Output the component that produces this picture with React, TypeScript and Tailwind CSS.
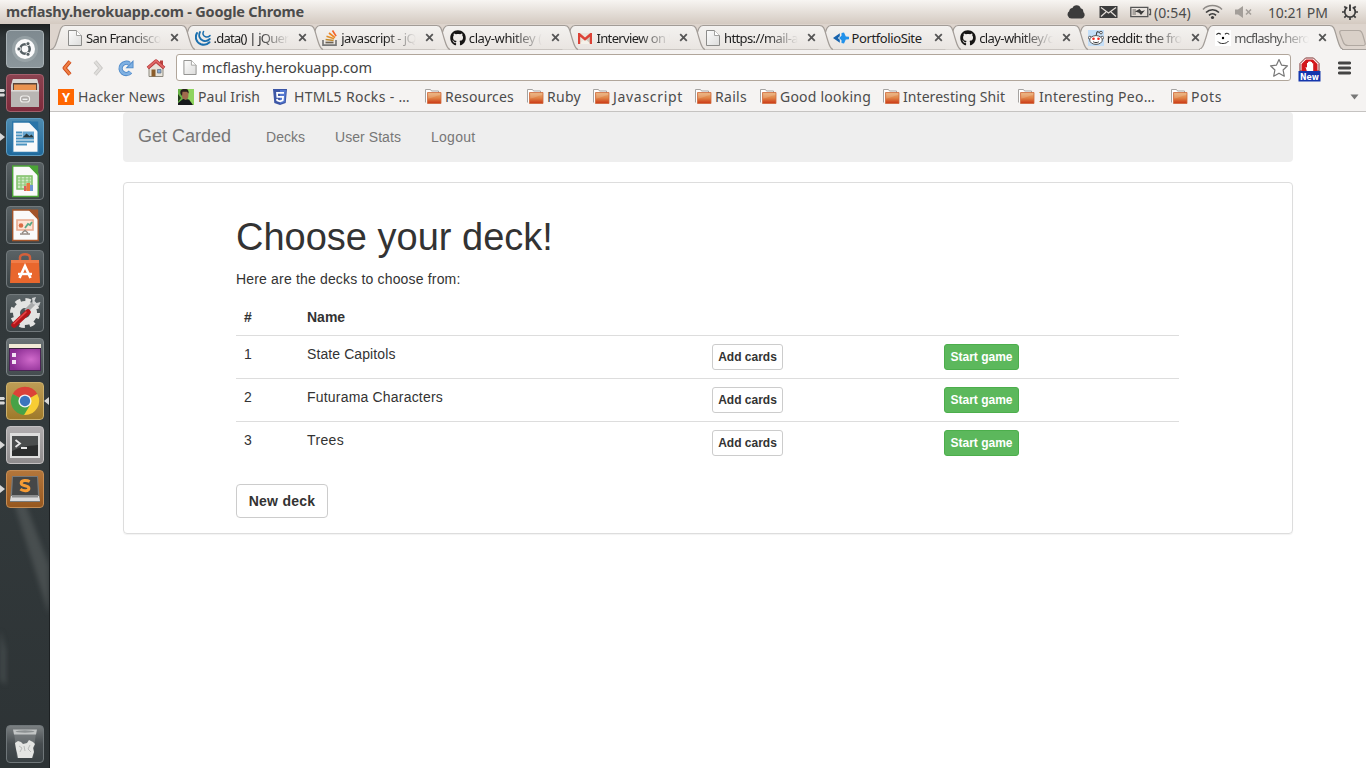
import { useLayoutEffect, useRef, useState, type ReactNode } from "react";
import { FaGithub } from "react-icons/fa";

/* Text whose tracking is adjusted so that the run takes a given width. */
function Fit({ text, width, className = "" }: { text: string; width: number; className?: string }) {
  const ref = useRef<HTMLSpanElement>(null);
  const [tracking, setTracking] = useState(0);
  useLayoutEffect(() => {
    const measure = () => {
      const el = ref.current;
      if (!el) return;
      const previous = el.style.letterSpacing;
      el.style.letterSpacing = "0px";
      const natural = el.getBoundingClientRect().width;
      el.style.letterSpacing = previous;
      setTracking((width - natural) / text.length);
    };
    measure();
  }, [text, width]);
  return (
    <span ref={ref} className={`inline-block shrink-0 whitespace-pre ${className}`} style={{ letterSpacing: `${tracking}px` }}>
      {text}
    </span>
  );
}

function PageIcon({ h = 16 }: { h?: number }) {
  return (
    <svg width="16" height={h} viewBox="0 0 16 16" className="shrink-0">
      <defs>
        <linearGradient id="pg" x1="0" y1="0" x2="1" y2="1">
          <stop offset="0" stopColor="#fdfdfd" />
          <stop offset="1" stopColor="#dcdcdb" />
        </linearGradient>
      </defs>
      <path d="M1.500.500h8l5 5v10h-13z" fill="url(#pg)" stroke="#8c8c8a" />
      <path d="M9.500.500v5h5" fill="#fff" stroke="#a3a3a1" />
    </svg>
  );
}

function JqueryIcon() {
  return (
    <svg width="16" height="16" viewBox="0 0 16 16" fill="none" stroke="#1a6fae" strokeLinecap="round" className="shrink-0">
      <path d="M2 3C-.3 7 1 12.500 6 14.300c3 1 6.300.2 8.500-2" strokeWidth="2" />
      <path d="M5 2c-1.800 3.500-.5 7.300 3 8.600 2.500.9 5 .2 6.800-1.600" strokeWidth="1.800" />
      <path d="M8.500 1.500c-1.200 2.300-.2 4.600 2 5.300 1.700.5 3.200 0 4.500-1.200" strokeWidth="1.500" />
    </svg>
  );
}

function StackIcon() {
  return (
    <svg width="16" height="16" viewBox="0 0 16 16" fill="none" className="shrink-0">
      <path d="M1 10v5.200h13V10" stroke="#777" strokeWidth="1.700" />
      <path d="M3.500 12.500h8" stroke="#6d6353" strokeWidth="1.700" />
      <path d="M3.600 9.500l8 1" stroke="#c08a2d" strokeWidth="1.700" />
      <path d="M4.500 6.300l7.600 2.500" stroke="#e08f2b" strokeWidth="1.700" />
      <path d="M7 3l6 4.700" stroke="#ee8420" strokeWidth="1.700" />
      <path d="M10.500.5l3.600 5.600" stroke="#f2642a" strokeWidth="1.700" />
    </svg>
  );
}

function GmailIcon() {
  return (
    <svg width="16" height="16" viewBox="0 0 16 16" className="shrink-0">
      <path d="M1 3h14v11H1z" fill="#e9e5dc" />
      <path d="M8 9l7-5v10H8z" fill="#cfcbbf" />
      <path d="M2 14l6-5 6 5z" fill="#f5f2ea" />
      <path d="M1 14V3h1.700L8 7.500 13.300 3H15v11h-2.200V6.700L8 10.800 3.200 6.700V14z" fill="#dc4236" />
    </svg>
  );
}

function PortfolioIcon() {
  return (
    <svg width="16" height="16" viewBox="0 0 16 16" className="shrink-0">
      <path d="M6.800 3.200v3L4.800 8l2 1.800v3L0 8z" fill="#1763ad" />
      <path d="M8.500 3l2.500-.4 1.800 4L16 6.700v2.600l-3.200.1-1.800 4-2.500-.4v-2.800L6 8l2.500-2.200z" fill="#2191ea" />
    </svg>
  );
}

function RedditIcon() {
  return (
    <svg width="16" height="16" viewBox="0 0 16 16" className="shrink-0">
      <path d="M0 0h16v16H0z" fill="#c5dff8" />
      <path d="M8 6l1-4.300 3.600.8" fill="none" stroke="#333" />
      <circle cx="13" cy="2.600" r="1.300" fill="#fff" stroke="#333" strokeWidth=".8" />
      <circle cx="1.900" cy="7.700" r="1.500" fill="#fff" stroke="#444" strokeWidth=".8" />
      <circle cx="14.100" cy="7.700" r="1.500" fill="#fff" stroke="#444" strokeWidth=".8" />
      <ellipse cx="8" cy="10" rx="6.300" ry="4.400" fill="#fff" stroke="#444" strokeWidth=".9" />
      <circle cx="5.500" cy="8.800" r="1.300" fill="#f32a22" />
      <circle cx="10.500" cy="8.800" r="1.300" fill="#f32a22" />
      <path d="M5.200 11.800c1.700 1.100 3.900 1.100 5.600 0" fill="none" stroke="#333" />
    </svg>
  );
}

function FaceIcon() {
  return (
    <svg width="16" height="16" viewBox="0 0 16 16" className="shrink-0" fill="none" stroke="#333">
      <path d="M0 0h16v16H0z" fill="#fff" stroke="none" />
      <path d="M1.500 4.700C2.500 3 4.500 3 5.800 4.300M10 4.300c1-1.400 3-1.400 4.200.2" strokeWidth="1.200" />
      <circle cx="8" cy="8" r="1.200" fill="#000" stroke="none" />
      <path d="M3 11.500c1.500 2.800 8.500 2.800 10.500-.5" />
    </svg>
  );
}

type TabInfo = { icon: ReactNode; text: string; width: number; fade: boolean };
const hub = <FaGithub size={16} color="#161514" className="shrink-0" />;
const tabs: TabInfo[] = [
  { icon: <PageIcon />, text: "San Francisco", width: 75, fade: true },
  { icon: <JqueryIcon />, text: ".data() | jQuer", width: 75, fade: true },
  { icon: <StackIcon />, text: "javascript - jQ", width: 75, fade: true },
  { icon: hub, text: "clay-whitley (", width: 73, fade: true },
  { icon: <GmailIcon />, text: "Interview on '", width: 74, fade: true },
  { icon: <PageIcon />, text: "https://mail-a", width: 74, fade: true },
  { icon: <PortfolioIcon />, text: "PortfolioSite", width: 70, fade: false },
  { icon: hub, text: "clay-whitley/c", width: 74, fade: true },
  { icon: <RedditIcon />, text: "reddit: the fro", width: 75, fade: true },
  { icon: <FaceIcon />, text: "mcflashy.hero", width: 75, fade: true },
];
const zOrder = ["z-[9]", "z-[8]", "z-[7]", "z-[6]", "z-[5]", "z-[4]", "z-[3]", "z-[2]", "z-[1]", "z-20"];

function Tab({ tab, index }: { tab: TabInfo; index: number }) {
  const active = index === tabs.length - 1;
  return (
    <div className={`relative flex h-[26px] w-[127.6px] shrink-0 items-center pl-[17px] ${zOrder[index]}`}>
      <svg width="148" height="26" className="absolute left-0 top-0">
        <defs>
          <linearGradient id="tabfill" x1="0" y1="0" x2="0" y2="1">
            <stop offset="0" stopColor="#f4f2f0" />
            <stop offset="1" stopColor="#e9e5e1" />
          </linearGradient>
        </defs>
        <path
          d="M1 25.500C5 24 5.500 21 7.500 15C10 7 10.500 1.500 15 1.500H131.500C136.500 1.500 136.500 6 139 14C141 20 141.500 24.500 145 25.500"
          fill={active ? "#f5f3f2" : "url(#tabfill)"}
          stroke="#a29c97"
          strokeWidth="1.200"
        />
        {active && <path d="M2 25.600H144" stroke="#f5f3f2" strokeWidth="1.400" />}
      </svg>
      <div className="relative flex w-full items-center pt-px">
        {tab.icon}
        <div
          className={`ml-[3px] w-[76px] pt-px text-[13px] leading-[19px] ${active ? "text-[#555]" : "text-[#222]"} ${
            tab.fade ? "[mask-image:linear-gradient(to_right,black_58%,transparent)]" : ""
          }`}
        >
          <Fit text={tab.text} width={tab.width} />
        </div>
        <svg width="9" height="9" viewBox="0 0 9 9" className="ml-[9px] shrink-0">
          <path d="M1.200 1.200l6.600 6.600M7.800 1.200L1.200 7.800" stroke="#555" strokeWidth="1.800" />
        </svg>
      </div>
    </div>
  );
}

function Folder() {
  return (
    <svg width="17" height="16" viewBox="0 0 17 16" className="shrink-0">
      <defs>
        <linearGradient id="fold" x1="0" y1="0" x2="0" y2="1">
          <stop offset="0" stopColor="#eab077" />
          <stop offset=".5" stopColor="#e08447" />
          <stop offset="1" stopColor="#cb3614" />
        </linearGradient>
      </defs>
      <path d="M.5 13.500V.500H5.500l1 1.500h7v3" fill="#fff" stroke="#a5a3a1" />
      <path d="M2.500 3.500h13.500v11H2.500z" fill="url(#fold)" stroke="#cf6a3c" strokeWidth=".8" />
      <path d="M3.300 9.500C8 9 11 6.500 15.300 6V4.200H3.300z" fill="#fff" opacity=".15" />
    </svg>
  );
}

function PaulIcon() {
  return (
    <svg width="16" height="16" viewBox="0 0 16 16" className="shrink-0">
      <path d="M0 0h16v16H0z" fill="#67b344" />
      <path d="M10 0h6v16h-6z" fill="#8fd45e" />
      <path d="M0 16v-2l5-4 6 .5 4 5.500z" fill="#17191c" />
      <path d="M3 2c1.500-3 7-2.500 7.500 1.500l-.3 5L8 11 4.500 9.500z" fill="#a06b4d" />
      <path d="M2.500 5C1.500 0 5 0 7 0c3 0 4 2 3.500 4.500L9 2.800H4.500L4 7z" fill="#28201b" />
      <path d="M0 5l3 4-3 4z" fill="#223d1a" />
    </svg>
  );
}

const folder = <Folder />;
const bookmarks: { icon: ReactNode; text: string; width: number; gap: string }[] = [
  {
    icon: (
      <span className="flex size-4 shrink-0 items-center justify-center bg-[#ff6600] font-['Open_Sans',sans-serif] text-[13px] font-bold leading-4 text-white">
        Y
      </span>
    ),
    text: "Hacker News",
    width: 87,
    gap: "ml-2 gap-1",
  },
  { icon: <PaulIcon />, text: "Paul Irish", width: 62, gap: "ml-[13px] gap-1" },
  {
    icon: (
      <svg width="16" height="16" viewBox="0 0 16 16" className="shrink-0">
        <path d="M1 0h14l-1.300 14L8 16l-5.700-2z" fill="#3c56a6" />
        <path d="M8 1h6l-1.200 12L8 14.700z" fill="#5478d0" />
        <path d="M12 3.800H5l.3 4h5.800l-.4 3.600L8 12.300l-2.800-.9-.2-1.500" fill="none" stroke="#fff" strokeWidth="1.700" />
      </svg>
    ),
    text: "HTML5 Rocks - …",
    width: 116,
    gap: "ml-3 gap-[6px]",
  },
  { icon: folder, text: "Resources", width: 69, gap: "ml-[15px] gap-[3px]" },
  { icon: folder, text: "Ruby", width: 34, gap: "ml-[13px] gap-[3px]" },
  { icon: folder, text: "Javascript", width: 70, gap: "ml-3 gap-[3px]" },
  { icon: folder, text: "Rails", width: 32, gap: "ml-3 gap-[3px]" },
  { icon: folder, text: "Good looking", width: 91, gap: "ml-[13px] gap-[3px]" },
  { icon: folder, text: "Interesting Shit", width: 102, gap: "ml-3 gap-[3px]" },
  { icon: folder, text: "Interesting Peo…", width: 116, gap: "ml-[13px] gap-1" },
  { icon: folder, text: "Pots", width: 31, gap: "ml-4 gap-[3px]" },
];

function TitleBar() {
  return (
    <div className="flex h-6 shrink-0 items-center bg-linear-to-b from-[#f7f5f2] to-[#d4cac1] pl-[6px] text-[#4c4c4c]">
      <Fit text="mcflashy.herokuapp.com - Google Chrome" width={298} className="text-[14.500px] font-bold" />
      <svg width="19" height="16" viewBox="0 0 19 16" className="ml-[763px] shrink-0" fill="#3c3c3c">
        <path d="M4.500 14.500a4 4 0 01-2.300-7.200A3.600 3.600 0 015.500 4a4.300 4.300 0 018.200.3 3.300 3.300 0 012.600 3.700 3.800 3.800 0 01-1.300 6.500z" />
      </svg>
      <svg width="19" height="14" viewBox="0 0 19 14" className="ml-[13px] shrink-0">
        <path d="M.5 1h18v12H.5z" fill="#3c3c3c" />
        <path d="M2 2.500l7.500 5.500L17 2.500M2 11.500l5-4.500M17 11.500l-5-4.500" fill="none" stroke="#e4ded8" strokeWidth="1.200" />
      </svg>
      <svg width="22" height="14" viewBox="0 0 22 14" className="ml-[12px] shrink-0">
        <path d="M.8 2.300h17v9.400H.8z" fill="none" stroke="#555" strokeWidth="1.300" />
        <path d="M19 4.500h1.500v5H19" fill="none" stroke="#555" strokeWidth="1.300" />
        <path d="M2.500 4H6v6H2.500z" fill="#a8a39e" />
        <path d="M5 6.500L9.500 4l2 2.300L15 5.300 11 10 9 7.800z" fill="#3c3c3c" />
      </svg>
      <Fit text="(0:54)" width={37} className="ml-[2px] text-[14px]" />
      <svg width="21" height="16" viewBox="0 0 21 16" className="ml-[11px] shrink-0" fill="none">
        <path d="M1 5.500C6 .3 15 .3 20 5.500" stroke="#8f8b87" strokeWidth="1.500" />
        <path d="M4 8.500c3.700-3.700 9.300-3.700 13 0" stroke="#3c3c3c" strokeWidth="1.700" />
        <path d="M7 11.300c2-2 5-2 7 0" stroke="#3c3c3c" strokeWidth="1.700" />
        <circle cx="10.500" cy="13.500" r="1.600" fill="#3c3c3c" />
      </svg>
      <svg width="18" height="14" viewBox="0 0 18 14" className="ml-[12px] shrink-0">
        <path d="M0 4.500h3L8 1v12L3 9.500H0z" fill="#a39e99" />
        <path d="M11 4.500l5 5M16 4.500l-5 5" stroke="#a39e99" strokeWidth="1.500" />
      </svg>
      <Fit text="10:21 PM" width={60} className="ml-[15px] text-[14px]" />
      <svg width="18" height="18" viewBox="0 0 18 18" className="ml-[13px] shrink-0" fill="none" stroke="#3c3c3c">
        <path d="M6.300 4.300a5.300 5.300 0 105.400 0" strokeWidth="1.800" />
        <path d="M9 1.500v6.500" strokeWidth="1.900" />
        <path d="M1 9h2.500M14.500 9H17M9 14.500V17M3.300 3.300l1.800 1.800M14.700 3.300l-1.800 1.800M3.300 14.700l1.800-1.800M14.700 14.700l-1.800-1.800" strokeWidth="1.700" />
      </svg>
    </div>
  );
}

function Toolbar() {
  return (
    <div className="flex h-[35px] items-center text-[#444]">
      <svg width="12" height="18" viewBox="0 0 12 18" className="ml-[11px] shrink-0">
        <path d="M9 2.500L3.500 9l5.500 6.500" fill="none" stroke="#cc491c" strokeWidth="4" strokeLinejoin="round" />
        <path d="M9 2.500L3.500 9l5.500 6.500" fill="none" stroke="#f08044" strokeWidth="2" />
      </svg>
      <svg width="12" height="18" viewBox="0 0 12 18" className="ml-[19px] shrink-0">
        <path d="M3 2.500L8.500 9 3 15.500" fill="none" stroke="#c9c7c5" strokeWidth="3.800" />
        <path d="M3 2.500L8.500 9 3 15.500" fill="none" stroke="#dfdddb" strokeWidth="2" />
      </svg>
      <svg width="18" height="18" viewBox="0 0 18 18" className="ml-[13px] shrink-0">
        <path d="M12.500 4.800A5.600 5.600 0 1013.500 13" fill="none" stroke="#4a86c7" strokeWidth="4.400" />
        <path d="M16.500 1v8.300H8.500z" fill="#4a86c7" />
        <path d="M12.500 4.800A5.600 5.600 0 1013.500 13" fill="none" stroke="#7fb0e2" strokeWidth="2.800" />
        <path d="M15.600 3.200v5.200h-5z" fill="#7fb0e2" />
      </svg>
      <svg width="20" height="20" viewBox="0 0 20 20" className="ml-[11px] shrink-0">
        <path d="M14 2.500h3V8h-3z" fill="#b9423f" />
        <path d="M3 9l7-6 7 6v9.500H3z" fill="#e7e3da" stroke="#8d897f" />
        <path d="M5.500 11.500h4v7h-4z" fill="#8b5d2c" />
        <path d="M11.500 11.500h3.500v3.500h-3.500z" fill="#86a9d2" stroke="#5e6b80" strokeWidth=".7" />
        <path d="M1.800 10L10 3l8.200 7" fill="none" stroke="#b23335" strokeWidth="3.400" strokeLinejoin="round" />
        <path d="M2 9.700L10 2.800l8 6.900" fill="none" stroke="#df6765" strokeWidth="1.900" />
      </svg>
      <div className="ml-[10px] flex h-[27px] w-[1115px] shrink-0 items-center rounded-[3px] border border-[#b1a69b] bg-white pl-[5px] pr-px">
        <PageIcon h={15} />
        <Fit text="mcflashy.herokuapp.com" width={170} className="ml-1 text-[14.500px]" />
        <svg width="20" height="20" viewBox="0 0 20 20" className="ml-auto shrink-0">
          <path d="M10 1.500l2.500 5.600 6 .7-4.400 4.200 1.200 6.200-5.300-3-5.300 3L5.900 12 1.500 7.800l6-.7z" fill="#fff" stroke="#777" strokeWidth="1.200" strokeLinejoin="round" />
        </svg>
      </div>
      <svg width="24" height="26" viewBox="0 0 24 26" className="ml-[7px] mt-1 shrink-0">
        <path d="M7.500 1h8l5.500 5.500V14H2V6.500z" fill="#fff" stroke="#7b2a2a" />
        <path d="M8 2.500h7l4.500 4.500V14H3.500V7z" fill="#d3181c" />
        <path d="M8.800 14l-1.300-4 1.500.5V6h1V4.800h1.400V4.200h1.300v.7h1.300v1.400h1.200V14z" fill="#fff" />
        <path d="M.5 14h22v10.500H.5z" fill="#1436ad" />
        <text x="11.500" y="22.500" textAnchor="middle" fontSize="9.500" fontWeight="700" fill="#fff" fontFamily="DejaVu Sans, sans-serif" textLength="19" lengthAdjust="spacingAndGlyphs">
          New
        </text>
      </svg>
      <svg width="13" height="14" viewBox="0 0 13 14" className="ml-[16px] shrink-0">
        <path d="M1.300 2h10.400M1.300 7h10.400M1.300 12h10.400" stroke="#444" strokeWidth="2.800" strokeLinecap="round" />
      </svg>
    </div>
  );
}

const docTile = (edge: string, art: ReactNode) => (
  <>
    <path d="M6.700 4h17.500l8 8v22.500H6.700z" fill="#fafafa" stroke={edge} strokeWidth="1.400" />
    <path d="M22 3.500h10.200V14z" fill={edge} />
    {art}
  </>
);

const launcherItems: { tile: string; art: ReactNode; pip: "none" | "one" | "two"; active?: boolean }[] = [
  {
    tile: "from-[#7f8a90] to-[#8b969b] border-[#a9b2b6]",
    pip: "none",
    art: (
      <>
        <circle cx="19" cy="19" r="13" fill="#a3adb1" opacity=".6" />
        <circle cx="19" cy="19" r="10" fill="#fff" opacity=".95" />
        <circle cx="19" cy="19" r="4.700" fill="none" stroke="#555f64" strokeWidth="2.600" />
        <circle cx="12.900" cy="19" r="2" fill="#555f64" stroke="#fff" strokeWidth=".8" />
        <circle cx="22" cy="13.700" r="2" fill="#555f64" stroke="#fff" strokeWidth=".8" />
        <circle cx="22" cy="24.300" r="2" fill="#555f64" stroke="#fff" strokeWidth=".8" />
      </>
    ),
  },
  {
    tile: "from-[#8b4250] to-[#7d2a3b] border-[#a4606c]",
    pip: "two",
    art: (
      <>
        <path d="M7 5h24l2 6v22H5V11z" fill="#cbc8c5" />
        <path d="M7 5h24l1 4H6z" fill="#d9d6d3" />
        <path d="M7 9h24v7H7z" fill="#5a4438" />
        <path d="M8 10.500h22V16H8z" fill="#ea9350" />
        <path d="M5 16h28v17H5z" fill="#b9b6b3" />
        <path d="M5 16h28v1.500H5z" fill="#dedbd8" />
        <rect x="14.500" y="22" width="9" height="6" rx="2.500" fill="#aaa7a4" stroke="#f0eeec" strokeWidth="1.200" />
        <path d="M16.500 25.300h5" stroke="#eee" strokeWidth="1.500" />
      </>
    ),
  },
  {
    tile: "from-[#4d8bb0] to-[#1f699b] border-[#5e9cc2]",
    pip: "one",
    art: docTile(
      "#2b75a8",
      <>
        <path d="M10 14.500h6M10 17.500h6M10 20.500h18M10 23.500h18M10 26.500h11" stroke="#4a93c0" strokeWidth="1.800" />
        <path d="M16.500 13.500h11.500v6H16.500z" fill="#66a5cf" />
        <path d="M16.500 19.500l4-4 3 2.500 2-1.500 2.500 3z" fill="#29393d" />
      </>,
    ),
  },
  {
    tile: "from-[#5a6265] to-[#3c4447] border-[#72797c]",
    pip: "none",
    art: docTile(
      "#4aa336",
      <>
        <path d="M11 14h15v13H11z" fill="#cfe9c4" stroke="#7cbf64" strokeWidth="1.500" />
        <path d="M11 17h15M11 20h15M11 23h15M15 14v13M19 14v13M23 14v13" stroke="#8cc977" strokeWidth="1.200" />
        <path d="M18 29v-5h2.500v5z" fill="#d75f5b" />
        <path d="M20.500 29v-8H24v8z" fill="#e8793c" />
        <path d="M24 29v-6h3v6z" fill="#6c96d4" />
      </>,
    ),
  },
  {
    tile: "from-[#5a6265] to-[#3c4447] border-[#72797c]",
    pip: "none",
    art: docTile(
      "#a35429",
      <>
        <path d="M11 14h16v10H11z" fill="#ffe3d4" stroke="#e9ab8f" strokeWidth="1.600" />
        <circle cx="15" cy="19.500" r="2.300" fill="#db6c45" />
        <path d="M19 22l3-4 2 1 2-3" fill="none" stroke="#5aa888" strokeWidth="1.800" />
        <path d="M16 27l3-2.500 3 2.500M14 28h10" fill="none" stroke="#958a82" strokeWidth="1.400" />
      </>,
    ),
  },
  {
    tile: "from-[#5a6265] to-[#3c4447] border-[#72797c]",
    pip: "none",
    art: (
      <>
        <path d="M14 11V7.500C14 3 24 3 24 7.500V11" fill="none" stroke="#d4603b" strokeWidth="2.500" />
        <path d="M5 10h28l1 23H4z" fill="#e9672d" />
        <path d="M5 10h28v3H5z" fill="#f07d48" />
        <path d="M13.500 28l5.500-12 5.500 12" fill="none" stroke="#fff" strokeWidth="2.600" />
        <path d="M12 24h14" stroke="#fff" strokeWidth="2.400" />
      </>
    ),
  },
  {
    tile: "from-[#5a6265] to-[#3c4447] border-[#72797c]",
    pip: "none",
    art: (
      <>
        <circle cx="19" cy="19" r="13" fill="none" stroke="#e3e3e2" strokeWidth="4" strokeDasharray="5.400 4.810" />
        <circle cx="19" cy="19" r="8.500" fill="none" stroke="#e3e3e2" strokeWidth="7" />
        <path d="M20 17L29 8" stroke="#a8aaab" strokeWidth="4.500" />
        <path d="M26 4l1 6 6 2 1.500-4-4 1-2-2 1.500-4z" fill="#d2d4d5" />
        <path d="M8 31L22 18" stroke="#b5151a" strokeWidth="5.500" strokeLinecap="round" />
        <path d="M8 29.500L20 18" stroke="#e5494a" strokeWidth="1.600" strokeLinecap="round" />
      </>
    ),
  },
  {
    tile: "from-[#6a7275] to-[#444c4f] border-[#7d8487]",
    pip: "none",
    art: (
      <>
        <defs>
          <radialGradient id="desk" cx=".7" cy=".5" r=".7">
            <stop offset="0" stopColor="#d06acb" />
            <stop offset="1" stopColor="#8a2c92" />
          </radialGradient>
        </defs>
        <path d="M3 6h32v27H3z" fill="#4a2554" />
        <path d="M4 11h30v21H4z" fill="url(#desk)" />
        <path d="M3 6h32v5H3z" fill="#f1ead6" />
        <path d="M3 10h32v1H3z" fill="#3c2140" />
        <path d="M6 15h4v4H6zM6 22h4v4H6z" fill="#f3e3f4" />
      </>
    ),
  },
  {
    tile: "from-[#bd9c55] to-[#9f7a2a] border-[#cbb06e]",
    pip: "two",
    active: true,
    art: (
      <g transform="translate(1.100 1.100) scale(.94)">
        <path d="M19 19L6 11.500A15 15 0 0132 11.500z" fill="#dc4138" />
        <path d="M19 4.300c5.600 0 10.400 3 13 7.400H19z" fill="#dc4138" />
        <path d="M19 19l13-7.500A15 15 0 0119 34l-2 0z" fill="#f7cd34" />
        <path d="M19 19L6 11.500A15 15 0 0018 34l6-10z" fill="#47a247" />
        <circle cx="19" cy="19" r="7" fill="#f2f2f2" />
        <circle cx="19" cy="19" r="5.500" fill="#3c74bd" />
      </g>
    ),
  },
  {
    tile: "from-[#b0adae] to-[#8f8c8d] border-[#c3c0c1]",
    pip: "one",
    art: (
      <>
        <path d="M4 7h30v25H4z" fill="#dededd" />
        <path d="M6 10h26v20H6z" fill="#2b2d2d" />
        <path d="M6 10h26v9C20 20 14 21 6 25z" fill="#4b4e4e" />
        <path d="M9.500 14l4.500 3.500L9.500 21M15 22h6" fill="none" stroke="#e8e8e8" strokeWidth="1.800" />
      </>
    ),
  },
  {
    tile: "from-[#b3763b] to-[#97581f] border-[#c58d55]",
    pip: "one",
    art: (
      <>
        <path d="M6 6h26l2 26H4z" fill="#777a7b" />
        <path d="M7 7h24l1 18H6z" fill="#454748" />
        <path d="M5 26h28l1 5H4z" fill="#dadada" />
        <path d="M6 25h26v2.500H6z" fill="#8b8d8e" />
        <path d="M23.700 11.500c-3-1.500-8.500-1.500-8.500 1.700 0 3.300 7.700 1.800 7.700 5 0 3.300-6 3-8.500 1" fill="none" stroke="#f79c35" strokeWidth="3" />
      </>
    ),
  },
];

function Tile({ tile, art }: { tile: string; art: ReactNode }) {
  return (
    <div className={`size-[38px] rounded-[4px] border bg-linear-to-b ${tile}`}>
      <svg width="38" height="38" viewBox="0 0 38 38" className="-ml-px -mt-px">
        {art}
      </svg>
    </div>
  );
}

function Launcher() {
  return (
    <aside className="relative flex w-[50px] shrink-0 flex-col gap-[6px] border-r border-[#1c2022] bg-[linear-gradient(180deg,#1d2122_0px,#2f3537_14px,#333a3c_55%,#2d3335_100%)] pb-[5px] pt-[6px]">
      <svg width="49" height="260" viewBox="0 0 49 260" className="absolute left-0 top-[476px]">
        <defs>
          <filter id="soft" x="-50%" y="-50%" width="200%" height="200%">
            <feGaussianBlur stdDeviation="2.500" />
          </filter>
        </defs>
        <path d="M13 0L24 0L49 65V115z" fill="#656a6b" opacity=".45" filter="url(#soft)" />
        <path d="M0 130l6 20v35l-6-5z" fill="#555b5d" opacity=".5" filter="url(#soft)" />
      </svg>
      {launcherItems.map((item, i) => (
        <div key={i} className="relative pl-[6px]">
          {item.pip === "one" && (
            <svg width="5" height="8" className="absolute left-0 top-[15px]">
              <path d="M0 0l5 4-5 4z" fill="#d8d8d8" />
            </svg>
          )}
          {item.pip === "two" && (
            <svg width="5" height="8" className="absolute left-0 top-[15px]">
              <path d="M0 0h4l1 1.500L4 3H0zM0 4.500h4L5 6 4 7.500H0z" fill="#d8d8d8" />
            </svg>
          )}
          <Tile tile={item.tile} art={item.art} />
          {item.active && (
            <svg width="5" height="8" className="absolute right-0 top-[15px]">
              <path d="M5 0L0 4l5 4z" fill="#d8d8d8" />
            </svg>
          )}
        </div>
      ))}
      <div className="relative mt-auto pl-[6px]">
        <Tile
          tile="from-[#7a7f81] via-[#474d50] to-[#3a4144] border-[#6f7679]"
          art={
            <>
              <path d="M8 7l3 26h16l3-26z" fill="#8b9092" opacity=".45" />
              <path d="M9 18l3-2 3 1 2 2 4-1 2-3 4 2 2 2-2 4 1 4-2 6H12l-1-5-1-4z" fill="#e4e5e3" />
              <path d="M13 21l3 2-2 4M24 20l-2 4 3 3M18 21l1 5" fill="none" stroke="#b9bbba" />
              <path d="M7 4.500h24l-1 5H8z" fill="#c2c5c5" />
              <ellipse cx="19" cy="6.500" rx="9.500" ry="1.200" fill="#8c9192" />
            </>
          }
        />
      </div>
    </aside>
  );
}

const decks = [
  { name: "State Capitols", width: 88.5 },
  { name: "Futurama Characters", width: 136 },
  { name: "Trees", width: 37 },
];

function Page() {
  return (
    <main className="flex-1 bg-white px-[73px] font-['Liberation_Sans',Arial,sans-serif] text-sm leading-5 text-[#333]">
      <nav className="flex h-[50px] w-[1170px] items-center rounded bg-[#eee] text-[#777]">
        <a className="px-[15px] pb-[2px] text-[18px]">Get Carded</a>
        <a className="ml-[5px] px-[15px]">Decks</a>
        <a className="flex px-[15px]">
          <Fit text="User Stats" width={66} />
        </a>
        <a className="flex px-[15px]">
          <Fit text="Logout" width={44.5} />
        </a>
      </nav>
      <section className="mt-5 w-[1170px] rounded border border-[#ddd] pb-[15px] pl-28 pr-[113px] pt-[33px] shadow-[0_1px_1px_rgba(0,0,0,0.05)]">
        <h1 className="text-[38px] leading-[42px]">Choose your deck!</h1>
        <p className="mb-[10px] mt-[11px] flex">
          <Fit text="Here are the decks to choose from:" width={224.5} />
        </p>
        <table className="mb-[19px] w-[943px] table-fixed border-collapse">
          <colgroup>
            <col className="w-[63px]" />
            <col className="w-[405px]" />
            <col className="w-[232px]" />
            <col className="w-[243px]" />
          </colgroup>
          <thead>
            <tr className="text-left">
              <th className="p-2">#</th>
              <th className="p-2">Name</th>
              <th />
              <th />
            </tr>
          </thead>
          <tbody>
            {decks.map((deck, i) => (
              <tr key={deck.name} className="h-[43px] border-t border-[#ddd] align-top">
                <td className="p-2">{i + 1}</td>
                <td className="flex p-2">
                  <Fit text={deck.name} width={deck.width} />
                </td>
                <td className="p-2">
                  <button className="block h-[26px] w-[71px] rounded-[3px] border border-[#ccc] bg-white text-xs font-bold leading-[18px]">Add cards</button>
                </td>
                <td className="p-2">
                  <button className="block h-[26px] w-[75px] rounded-[3px] border border-[#4cae4c] bg-[#5cb85c] text-xs font-bold leading-[18px] text-white">
                    Start game
                  </button>
                </td>
              </tr>
            ))}
          </tbody>
        </table>
        <button className="flex h-[34px] w-[92px] items-center justify-center rounded border border-[#ccc] bg-white font-bold">
          <Fit text="New deck" width={66.5} />
        </button>
      </section>
    </main>
  );
}

export default function App() {
  return (
    <div className="flex h-[768px] w-[1366px] flex-col overflow-hidden bg-white font-['Noto_Sans',sans-serif]">
      <TitleBar />
      <div className="flex min-h-0 flex-1">
        <Launcher />
        <div className="flex w-[1316px] flex-col">
          <div className="flex h-[26px] w-full shrink-0 overflow-hidden bg-[#ddd4cd] shadow-[inset_0_-1px_0_#a9a39e]">
            {tabs.map((tab, i) => (
              <Tab key={i} tab={tab} index={i} />
            ))}
            <svg width="28" height="26" viewBox="0 0 28 26" className="relative z-30 ml-[12px] shrink-0">
              <path d="M3.500 6.500h17c3 0 3.500 2 4.500 5l2 7c.7 2-.3 3-2 3H10c-3 0-4-1-5-4L2 9.500c-.6-2 0-3 1.500-3z" fill="#d9d0c8" stroke="#b0a8a1" strokeWidth="1.200" />
            </svg>
          </div>
          <header className="h-[62px] shrink-0 border-b border-[#c5c3c1] bg-[#f5f3f2]">
            <Toolbar />
            <div className="flex h-[24px] items-center text-[14px] leading-5 text-[#4c4c4c]">
              {bookmarks.map((b) => (
                <div key={b.text} className={`flex shrink-0 items-center ${b.gap}`}>
                  {b.icon}
                  <Fit text={b.text} width={b.width} />
                </div>
              ))}
              <svg width="9" height="6" viewBox="0 0 9 6" className="ml-auto mr-[7px]">
                <path d="M.5.500h8L4.500 5.500z" fill="#777" />
              </svg>
            </div>
          </header>
          <Page />
        </div>
      </div>
    </div>
  );
}
